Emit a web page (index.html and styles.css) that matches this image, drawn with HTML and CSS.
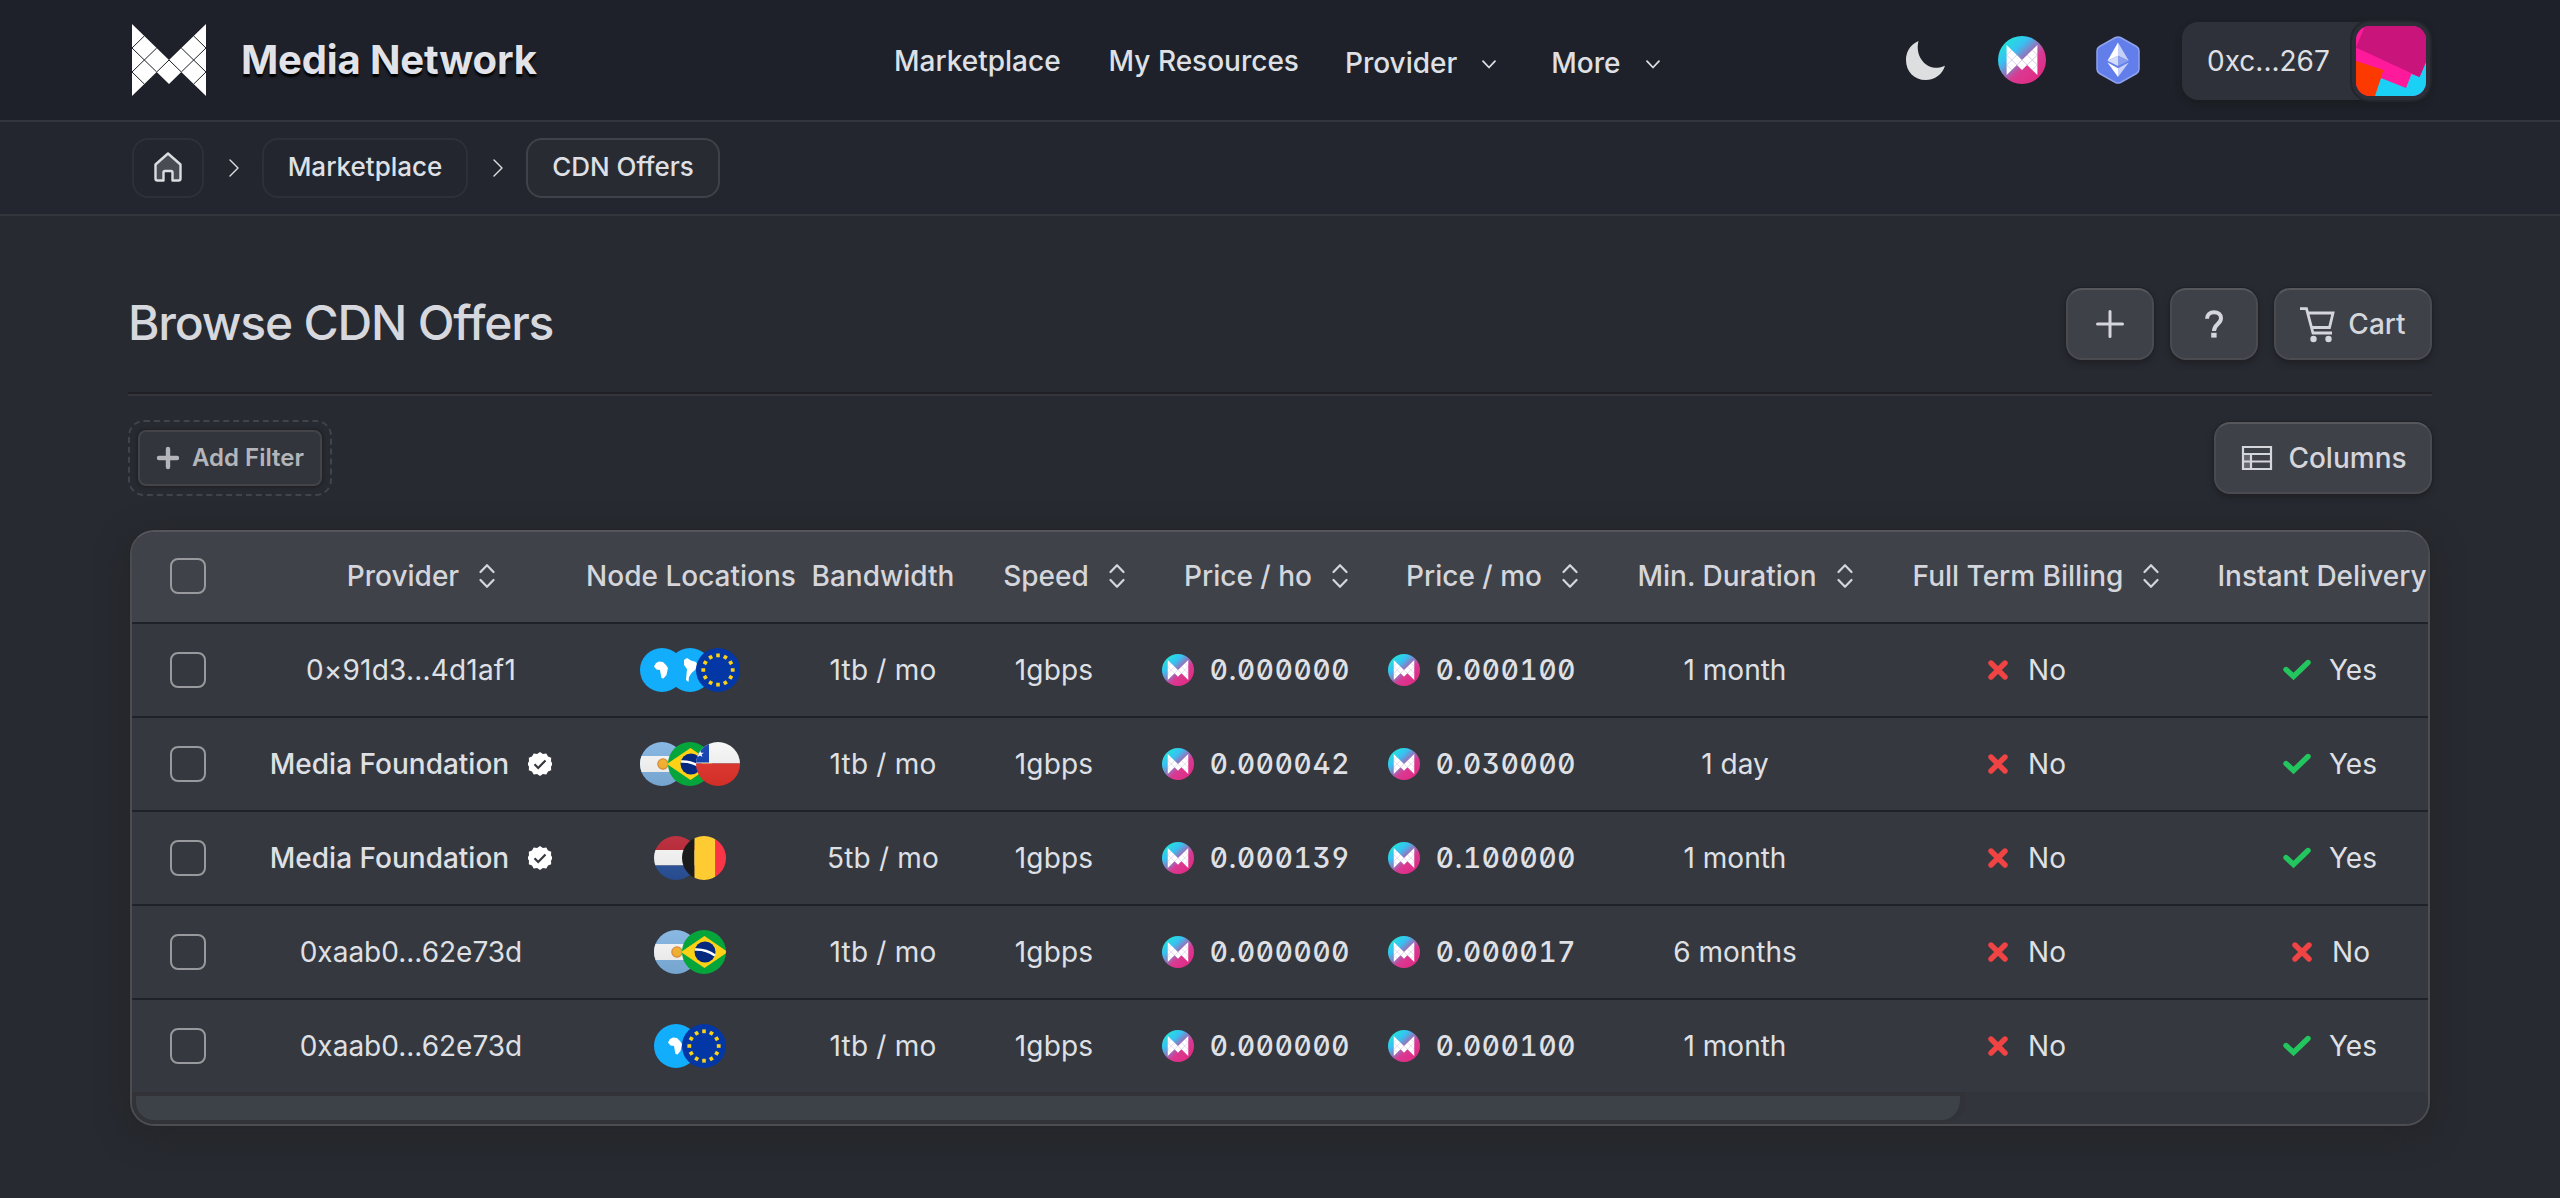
FILE: index.html
```html
<!DOCTYPE html>
<html lang="en">
<head>
<meta charset="utf-8">
<title>Media Network - CDN Offers</title>
<link rel="stylesheet" href="styles.css">
</head>
<body>
<svg class="defs" width="0" height="0" aria-hidden="true">
  <defs>
    <linearGradient id="tokenFill" x1="0.12" y1="0.1" x2="0.82" y2="0.86">
      <stop offset="0" stop-color="#1fe6da"/><stop offset=".3" stop-color="#38c0f2"/>
      <stop offset=".68" stop-color="#d93a92"/><stop offset="1" stop-color="#e02c86"/>
    </linearGradient>
    <linearGradient id="shade" x1="0" y1="0" x2="0" y2="1">
      <stop offset="0" stop-color="#fff" stop-opacity=".08"/><stop offset="1" stop-color="#000" stop-opacity=".08"/>
    </linearGradient>
    <clipPath id="disc"><circle cx="22" cy="22" r="22"/></clipPath>
    <clipPath id="avatarClip"><rect width="70" height="70" rx="14"/></clipPath>
  </defs>
  <symbol id="token" viewBox="0 0 48 48">
    <circle cx="24" cy="24" r="24" fill="url(#tokenFill)"/>
    <g transform="translate(8.6 9) scale(.416)">
      <path fill="#fff" d="M0 0L37 36L74 0V72L49.3 48L37 60L24.7 48L0 72Z"/>
      <path fill="none" stroke="#b9a3d6" stroke-width="1.3" d="M0 24L12.3 12M0 48L24.7 24M24.7 48L37 36L49.3 48M0 24L24.7 48M0 48L12.3 60M74 24L61.7 12M74 48L49.3 24M74 24L49.3 48M74 48L61.7 60"/>
    </g>
  </symbol>
  <symbol id="sort" viewBox="0 0 16 24">
    <path fill="none" stroke="currentColor" stroke-width="2.200" stroke-linecap="round" stroke-linejoin="round" d="M1.500 8L8 1.200L14.500 8M1.500 16L8 22.800L14.500 16"/>
  </symbol>
  <symbol id="verified" viewBox="0 0 24 24">
    <path fill="#fff" d="M12 0l2.900 2 3.400-.6 1.700 3 3.200 1.300-.2 3.500L24.500 12 23 14.800l.2 3.500-3.200 1.300-1.700 3-3.400-.6-2.900 2-2.900-2-3.400.6-1.700-3L.8 18.300 1 14.800-.5 12 1 9.200.8 5.700 4 4.400l1.700-3 3.400.6z"/>
    <path fill="none" stroke="#36383f" stroke-width="2.200" d="M6.500 12.300l3.700 3.700 7.300-7.600"/>
  </symbol>
  <symbol id="no" viewBox="0 0 20 20"><path fill="none" stroke="#f04343" stroke-width="5.400" stroke-linecap="round" d="M3 3L17 17M17 3L3 17"/></symbol>
  <symbol id="yes" viewBox="0 0 28 22"><path fill="none" stroke="#22c55e" stroke-width="5.400" stroke-linecap="round" stroke-linejoin="miter" d="M3 10.500L10.500 17.500L25 3.500"/></symbol>
  <symbol id="africa" viewBox="0 0 44 44"><circle cx="22" cy="22" r="22" fill="#12adfb"/><path fill="#fff" d="M16 15L19 13.500L23 14L26 17L28 20L27 24.500L26.500 27L23.500 30.500L21.500 30L20.500 25L20 22L16.500 21.500L14 18.500Z"/></symbol>
  <symbol id="samerica" viewBox="0 0 44 44"><circle cx="22" cy="22" r="22" fill="#12adfb"/><path fill="#fff" d="M16 12L19 10L23 12.500L28 14L29.500 17L27 22L23.500 25L21 29L20.500 34L18 32L18.500 26L19 21L16 17Z"/></symbol>
  <symbol id="eu" viewBox="0 0 44 44"><circle cx="22" cy="22" r="22" fill="#0337a6"/>
    <g fill="#fdd116"><path id="st" d="M20.200 5.400h3.600v3.800h-3.600z"/><use href="#st" transform="rotate(30 22 22)"/><use href="#st" transform="rotate(60 22 22)"/><use href="#st" transform="rotate(90 22 22)"/><use href="#st" transform="rotate(120 22 22)"/><use href="#st" transform="rotate(150 22 22)"/><use href="#st" transform="rotate(180 22 22)"/><use href="#st" transform="rotate(210 22 22)"/><use href="#st" transform="rotate(240 22 22)"/><use href="#st" transform="rotate(270 22 22)"/><use href="#st" transform="rotate(300 22 22)"/><use href="#st" transform="rotate(330 22 22)"/></g></symbol>
  <symbol id="ar" viewBox="0 0 44 44"><g clip-path="url(#disc)"><path fill="#7fb2e0" d="M0 0h44v44H0z"/><path fill="#f7f7f7" d="M0 14h44v16H0z"/><circle cx="23" cy="22" r="5.200" fill="#f6b42e" stroke="#e08a36" stroke-width="1.200"/><path fill="url(#shade)" d="M0 0h44v44H0z"/></g></symbol>
  <symbol id="br" viewBox="0 0 44 44"><g clip-path="url(#disc)"><path fill="#06a53c" d="M0 0h44v44H0z"/><path fill="#fdd116" d="M-1 22L22.500 6L46 22L22.500 38Z"/><circle cx="23" cy="22" r="10.500" fill="#04297e"/><path fill="none" stroke="#fff" stroke-width="2.600" d="M13 19.500Q24 19 33 25.500"/></g></symbol>
  <symbol id="cl" viewBox="0 0 44 44"><g clip-path="url(#disc)"><path fill="#f7f7f7" d="M0 0h44v21.500H0z"/><path fill="#e2322a" d="M0 21.500h44V44H0z"/><path fill="#0a3db0" d="M0 0h13v20.500H0z"/><path fill="#fff" d="M4 8l1 2.700h3l-2.400 1.600.8 2.800L4 13.500l-2.400 1.600.8-2.800L0 10.700h3z"/><path fill="url(#shade)" d="M0 0h44v44H0z"/></g></symbol>
  <symbol id="nl" viewBox="0 0 44 44"><g clip-path="url(#disc)"><path fill="#b92231" d="M0 0h44v14H0z"/><path fill="#f7f7f7" d="M0 14h44v15.500H0z"/><path fill="#29529b" d="M0 29.500h44V44H0z"/><path fill="url(#shade)" d="M0 0h44v44H0z"/></g></symbol>
  <symbol id="be" viewBox="0 0 44 44"><g clip-path="url(#disc)"><path fill="#1b1b1b" d="M0 0h12.500v44H0z"/><path fill="#fecb33" d="M12.500 0h21v44h-21z"/><path fill="#fb3548" d="M33.500 0H44v44H33.500z"/></g></symbol>
</svg>

<header class="topbar">
  <a class="brand">
    <svg class="brand-mark" viewBox="0 0 74 72"><path fill="#fff" d="M0 0L37 36L74 0V72L49.3 48L37 60L24.700 48L0 72Z"/><path fill="none" stroke="#1e2129" stroke-width="1" d="M0 24L12.300 12M0 48L24.700 24M24.700 48L37 36L49.300 48M0 24L24.700 48M0 48L12.300 60M74 24L61.700 12M74 48L49.300 24M74 24L49.300 48M74 48L61.700 60"/></svg>
    <span class="brand-name">Media Network</span>
  </a>
  <nav class="nav">
    <a class="nav-market">Marketplace</a>
    <a class="nav-res">My Resources</a>
    <a class="nav-menu">Provider <svg class="caret" viewBox="0 0 14 9"><path d="M1 1.200L7 7.500L13 1.200"/></svg></a>
    <a class="nav-menu">More <svg class="caret" viewBox="0 0 14 9"><path d="M1 1.200L7 7.500L13 1.200"/></svg></a>
  </nav>
  <div class="tools">
    <svg class="moon" viewBox="0 0 39 39"><path fill="#dddee0" d="M12.500 0C3 4 0 12 0 19C0 31 8.500 39 19.500 39C29 39 36.500 33 39 24.700C35 26.500 32.500 26.700 29 26.700C18 26 9 14 12.500 0Z"/></svg>
    <svg class="token-lg"><use href="#token"/></svg>
    <svg class="eth" viewBox="0 0 44 48"><path fill="#627eea" stroke="#8fa3ef" stroke-width="1.500" stroke-linejoin="round" d="M19.500 1.500Q22 .3 24.500 1.500L40.500 10.500Q43 12 43 15V33Q43 36 40.500 37.500L24.500 46.500Q22 47.700 19.500 46.500L3.500 37.500Q1 36 1 33V15Q1 12 3.500 10.500Z"/>
      <path fill="#fff" d="M22 6.500V19.700L11.500 24.700Z"/><path fill="#c7d1f8" d="M22 6.500V19.700L32.800 24.700Z"/><path fill="#d5dcfa" d="M22 19.700V30L11.500 24.700Z"/><path fill="#8b9ff0" d="M22 19.700V30L32.800 24.700Z"/><path fill="#fff" d="M11.500 26.500L22 32.300V41Z"/><path fill="#c7d1f8" d="M32.800 26.500L22 32.300V41Z"/></svg>
    <div class="wallet">
      <span>0xc...267</span>
      <div class="avatar-frame"><svg class="avatar" viewBox="0 0 70 70"><g clip-path="url(#avatarClip)"><path fill="#ff1a9b" d="M0 0h70v70H0z"/><path fill="#1ad0f4" d="M25 52L50 62L55.500 48L63.500 51L70 36V70H18Z"/><path fill="#fc3a00" d="M0 35L27.300 44L19 70H0Z"/><path fill="#c8147b" d="M9 0H70V36L63.500 51L0 21.500Z"/></g></svg></div>
    </div>
  </div>
</header>

<div class="crumbs">
  <a class="crumb crumb-home"><svg class="home" viewBox="0 0 28 30"><path d="M14 1.500L1.500 12.500V26.500Q1.500 28.500 3.500 28.500H9.500V20.500Q9.500 19 11 19H17Q18.500 19 18.500 20.500V28.500H24.500Q26.500 28.500 26.500 26.500V12.500Z"/></svg></a>
  <svg class="sep" viewBox="0 0 10 18"><path d="M1 1L9 9L1 17"/></svg>
  <a class="crumb crumb-market">Marketplace</a>
  <svg class="sep" viewBox="0 0 10 18"><path d="M1 1L9 9L1 17"/></svg>
  <a class="crumb crumb-current">CDN Offers</a>
</div>

<main class="page">
  <div class="page-head">
    <h1>Browse CDN Offers</h1>
    <div class="actions">
      <button class="btn btn-icon"><svg class="i-plus" viewBox="0 0 28 28"><path d="M14 1.500V26.500M1.500 14H26.500"/></svg></button>
      <button class="btn btn-icon"><svg class="i-help" viewBox="0 0 18 28"><path fill="none" stroke="currentColor" stroke-width="4" d="M2 8.800C2 4.500 5 2.200 9 2.200C13.200 2.200 16 4.600 16 8.200C16 14 9 14 9 21"/><path fill="currentColor" d="M6.200 22.800h5.400v4.800h-5.400z"/></svg></button>
      <button class="btn btn-cart"><svg class="i-cart" viewBox="0 0 35 35"><path fill="none" stroke="currentColor" stroke-width="2.800" d="M0 1.600H6.500L13 26H32M7.500 6H33L29.500 20.500H11.500"/><circle cx="13.500" cy="32" r="3.200"/><circle cx="28.500" cy="32" r="3.200"/></svg><span>Cart</span></button>
    </div>
  </div>
  <div class="toolbar">
    <div class="filter-zone"><button class="filter"><svg class="i-add" viewBox="0 0 22 22"><path d="M11 2V20M2 11H20"/></svg><span>Add Filter</span></button></div>
    <button class="btn btn-columns"><svg class="i-cols" viewBox="0 0 30 24"><path fill="#8d8e93" fill-opacity=".5" d="M1 8H9V23H1Z"/><path fill="none" stroke="currentColor" stroke-width="2.200" d="M1 1H29V23H1ZM1 8H29M1 15.500H29M9 8V23"/></svg><span>Columns</span></button>
  </div>

  <section class="panel">
    <table class="offers">
      <colgroup><col class="c-check"><col class="c-provider"><col class="c-node"><col class="c-band"><col class="c-speed"><col class="c-ho"><col class="c-mo"><col class="c-min"><col class="c-full"><col class="c-inst"></colgroup>
      <thead><tr>
        <th><span class="box"></span></th>
        <th><span class="sortable">Provider<svg class="sort"><use href="#sort"/></svg></span></th>
        <th>Node Locations</th><th>Bandwidth</th>
        <th><span class="sortable">Speed<svg class="sort"><use href="#sort"/></svg></span></th>
        <th><span class="sortable">Price / ho<svg class="sort"><use href="#sort"/></svg></span></th>
        <th><span class="sortable">Price / mo<svg class="sort"><use href="#sort"/></svg></span></th>
        <th><span class="sortable">Min. Duration<svg class="sort"><use href="#sort"/></svg></span></th>
        <th><span class="sortable">Full Term Billing<svg class="sort"><use href="#sort"/></svg></span></th>
        <th><span class="sortable">Instant Delivery<svg class="sort"><use href="#sort"/></svg></span></th>
      </tr></thead>
      <tbody>
        <tr><td><span class="box"></span></td><td class="loose">0×91d3...4d1af1</td>
          <td><span class="flags"><svg><use href="#africa"/></svg><svg><use href="#samerica"/></svg><svg><use href="#eu"/></svg></span></td>
          <td class="loose">1tb / mo</td><td class="loose">1gbps</td>
          <td><span class="price"><svg><use href="#token"/></svg>0.000000</span></td><td><span class="price"><svg><use href="#token"/></svg>0.000100</span></td>
          <td>1 month</td><td><span class="flag-no"><svg><use href="#no"/></svg>No</span></td><td><span class="flag-yes"><svg><use href="#yes"/></svg>Yes</span></td></tr>
        <tr><td><span class="box"></span></td><td><span class="named">Media Foundation<svg><use href="#verified"/></svg></span></td>
          <td><span class="flags"><svg><use href="#ar"/></svg><svg><use href="#br"/></svg><svg><use href="#cl"/></svg></span></td>
          <td class="loose">1tb / mo</td><td class="loose">1gbps</td>
          <td><span class="price"><svg><use href="#token"/></svg>0.000042</span></td><td><span class="price"><svg><use href="#token"/></svg>0.030000</span></td>
          <td>1 day</td><td><span class="flag-no"><svg><use href="#no"/></svg>No</span></td><td><span class="flag-yes"><svg><use href="#yes"/></svg>Yes</span></td></tr>
        <tr><td><span class="box"></span></td><td><span class="named">Media Foundation<svg><use href="#verified"/></svg></span></td>
          <td><span class="flags"><svg><use href="#nl"/></svg><svg><use href="#be"/></svg></span></td>
          <td class="loose">5tb / mo</td><td class="loose">1gbps</td>
          <td><span class="price"><svg><use href="#token"/></svg>0.000139</span></td><td><span class="price"><svg><use href="#token"/></svg>0.100000</span></td>
          <td>1 month</td><td><span class="flag-no"><svg><use href="#no"/></svg>No</span></td><td><span class="flag-yes"><svg><use href="#yes"/></svg>Yes</span></td></tr>
        <tr><td><span class="box"></span></td><td>0xaab0...62e73d</td>
          <td><span class="flags"><svg><use href="#ar"/></svg><svg><use href="#br"/></svg></span></td>
          <td class="loose">1tb / mo</td><td class="loose">1gbps</td>
          <td><span class="price"><svg><use href="#token"/></svg>0.000000</span></td><td><span class="price"><svg><use href="#token"/></svg>0.000017</span></td>
          <td>6 months</td><td><span class="flag-no"><svg><use href="#no"/></svg>No</span></td><td><span class="flag-no"><svg><use href="#no"/></svg>No</span></td></tr>
        <tr><td><span class="box"></span></td><td>0xaab0...62e73d</td>
          <td><span class="flags"><svg><use href="#africa"/></svg><svg><use href="#eu"/></svg></span></td>
          <td class="loose">1tb / mo</td><td class="loose">1gbps</td>
          <td><span class="price"><svg><use href="#token"/></svg>0.000000</span></td><td><span class="price"><svg><use href="#token"/></svg>0.000100</span></td>
          <td>1 month</td><td><span class="flag-no"><svg><use href="#no"/></svg>No</span></td><td><span class="flag-yes"><svg><use href="#yes"/></svg>Yes</span></td></tr>
      </tbody>
    </table>
    <div class="scroll-track"><div class="scroll-thumb"></div></div>
  </section>
</main>
</body>
</html>
```
FILE: styles.css
```css
* { box-sizing: border-box; }
body {
  margin: 0;
  height: 1198px;
  overflow: hidden;
  background: #272a31;
  color: #dfe0e5;
  font-family: Inter, "Liberation Sans", sans-serif;
  font-size: 28px;
  line-height: 40px;
}
svg { display: block; flex: none; overflow: visible; }
.defs { position: absolute; }
button { font: inherit; color: inherit; margin: 0; padding: 0; }

.topbar {
  display: grid;
  grid-template-columns: 762px 1fr auto;
  align-items: center;
  height: 122px;
  padding: 0 130px 0 132px;
  background: #1e2129;
  border-bottom: 2px solid #33363e;
}
.brand { display: flex; align-items: center; gap: 35px; }
.brand-mark { width: 74px; height: 72px; }
.brand-name {
  font-size: 40px;
  font-weight: 700;
  letter-spacing: -0.15px;
  color: #e2e3e9;
  text-shadow: 0 3px 2px #000;
}
.nav { display: flex; align-items: center; font-weight: 500; padding-top: 2px; }
.nav-market { margin-right: 48px; }
.nav-res { margin-right: 46px; }
.nav-menu { display: flex; align-items: center; margin: 4px 55px 0 0; }
.caret { width: 14px; height: 9px; margin: 3px 0 0 25px; }
.caret path, .sep path { fill: none; stroke: #dddee2; stroke-width: 1.8; stroke-linecap: round; stroke-linejoin: round; }
.tools { display: flex; align-items: center; }
.moon { width: 39px; height: 39px; margin-right: 53px; }
.token-lg { width: 48px; height: 48px; margin-right: 50px; }
.eth { width: 44px; height: 48px; margin-right: 42px; }
.wallet {
  display: flex;
  align-items: center;
  justify-content: space-between;
  width: 248px;
  height: 78px;
  margin-top: 2px;
  padding-left: 25px;
  border-radius: 16px;
  background: #2e3139;
  box-shadow: 0 3px 6px rgba(25, 26, 28, .8);
}
.avatar-frame {
  padding: 4px;
  border-radius: 18px;
  background: #2c2f37;
  box-shadow: 0 0 0 2px #23262d;
}
.avatar { width: 70px; height: 70px; }

.crumbs {
  display: flex;
  align-items: center;
  height: 94px;
  padding-left: 132px;
  background: #23262e;
  border-bottom: 2px solid #33363d;
  font-size: 26px;
  font-weight: 500;
}
.crumb {
  display: flex;
  align-items: center;
  justify-content: center;
  height: 60px;
  padding-bottom: 2px;
  border: 2px solid #2d3038;
  border-radius: 16px;
}
.crumb-home { width: 72px; }
.crumb-market { width: 206px; }
.crumb-current { width: 194px; border-color: #3f4249; background: #292b33; }
.home { width: 28px; height: 30px; }
.home path { fill: #4a4c53; stroke: #dcdde1; stroke-width: 2.4; stroke-linejoin: round; }
.sep { width: 10px; height: 18px; margin: 0 23px 0 25px; }
.sep path { stroke-width: 1.4; }

.page { padding: 72px 128px 0; }
.page-head {
  display: flex;
  justify-content: space-between;
  height: 106px;
  border-bottom: 2px solid #1e2026;
  box-shadow: 0 2px 0 #34363c;
}
h1 {
  margin: 5px 0 0;
  font-size: 48px;
  line-height: 60px;
  font-weight: 500;
  letter-spacing: -1.2px;
  color: #d7d8de;
}
.actions { display: flex; gap: 16px; }
.btn {
  display: flex;
  align-items: center;
  justify-content: center;
  height: 72px;
  border: 2px solid #4a4b50;
  border-top-color: #56575c;
  border-radius: 16px;
  background: #3f4148;
  color: #d5d6dc;
  font-weight: 500;
  box-shadow: 0 0 0 1px #202228, 0 3px 6px rgba(25, 26, 29, .7);
}
.btn-icon { width: 88px; }
.btn-cart { width: 158px; gap: 13px; }
.btn-columns { width: 218px; gap: 16px; padding-left: 3px; }
.i-plus { width: 28px; height: 28px; }
.i-plus path { stroke: currentColor; stroke-width: 3; stroke-linecap: round; }
.i-help { width: 18px; height: 28px; }
.i-cart { width: 35px; height: 35px; fill: currentColor; }
.i-cols { width: 30px; height: 24px; }
.toolbar { display: flex; justify-content: space-between; align-items: center; height: 76px; margin-top: 26px; }
.toolbar .btn { align-self: flex-start; margin-top: 2px; }
.filter-zone {
  width: 204px;
  height: 76px;
  padding: 8px;
  border: 2px dashed #41444c;
  border-radius: 16px;
}
.filter {
  display: flex;
  align-items: center;
  width: 184px;
  height: 56px;
  padding-left: 17px;
  border: 2px solid #434449;
  border-radius: 8px;
  background: #32353c;
  color: #b4b5ba;
  font-size: 24px;
  font-weight: 600;
  box-shadow: 0 0 2px 2px #222429;
}
.i-add { width: 22px; height: 22px; margin-right: 13px; }
.i-add path { stroke: currentColor; stroke-width: 4.4; stroke-linecap: round; }

.panel {
  position: relative;
  width: 2300px;
  height: 596px;
  margin: 34px 0 0 2px;
  overflow: hidden;
  border: 2px solid #4c4d51;
  border-top-color: #55565d;
  border-radius: 24px;
  background: #36383f;
  box-shadow: 0 0 0 1px #23252a, 0 8px 24px 8px rgba(36, 37, 40, .8);
}
.offers { width: 2348px; table-layout: fixed; border-collapse: separate; border-spacing: 0; }
.c-check { width: 112px; }
.c-provider { width: 334px; }
.c-node { width: 226px; }
.c-band { width: 158px; }
.c-speed { width: 184px; }
.c-ho { width: 220px; }
.c-mo { width: 232px; }
.c-min { width: 274px; }
.c-full { width: 308px; }
.c-inst { width: 300px; }
.offers th, .offers td {
  height: 94px;
  padding: 0;
  border-bottom: 2px solid #1f2229;
  text-align: center;
  vertical-align: middle;
  white-space: nowrap;
}
.offers th { height: 92px; padding-bottom: 2px; background: #404249; color: #d5d6db; font-weight: 500; }
.offers tbody tr:last-child td { height: 92px; border-bottom: 0; }
.offers td > span, .sortable { display: flex; align-items: center; justify-content: center; }
.sortable { padding-left: 20px; gap: 20px; }
.sort { width: 16px; height: 24px; }
.offers .box {
  display: block;
  width: 36px;
  height: 36px;
  margin: 0 auto;
  border: 2px solid #98999c;
  border-radius: 8px;
}
.loose { letter-spacing: 0.2px; }
.named { gap: 19px; font-weight: 500; }
.named svg { width: 24px; height: 24px; }
.offers .flags { padding-right: 2px; }
.flags svg { width: 44px; height: 44px; }
.flags svg + svg { margin-left: -16px; }
.price { gap: 16px; font-weight: 500; letter-spacing: 0.75px; font-feature-settings: "tnum", "zero", "ss01"; }
.price svg { width: 32px; height: 32px; }
.flag-no { gap: 20px; padding-left: 2px; }
.flag-yes { gap: 18px; }
.flag-no svg { width: 20px; height: 20px; }
.flag-yes svg { width: 28px; height: 22px; }
.scroll-track { height: 32px; background: #32353b; }
.scroll-thumb {
  width: 1834px;
  height: 32px;
  border: 4px solid #323338;
  border-right-width: 6px;
  border-radius: 0 0 24px 22px;
  background: #3d4248;
}
```
